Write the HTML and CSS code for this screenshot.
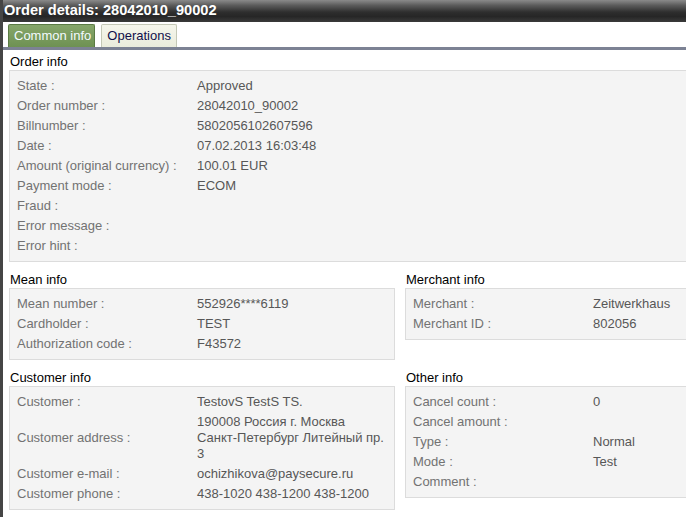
FILE: index.html
```html
<!DOCTYPE html>
<html>
<head>
<meta charset="utf-8">
<link rel="stylesheet" href="styles.css">
</head>
<body>
<div class="window">
  <div class="titlebar">Order details: 28042010_90002</div>
  <div class="tabs">
    <div class="tab active">Common info</div>
    <div class="tab">Operations</div>
  </div>
  <div class="content">
    <div class="section top">
      <div class="stitle">Order info</div>
      <div class="box edge">
        <table>
          <tr><td class="l">State :</td><td class="v">Approved</td></tr>
          <tr><td class="l">Order number :</td><td class="v">28042010_90002</td></tr>
          <tr><td class="l">Billnumber :</td><td class="v">5802056102607596</td></tr>
          <tr><td class="l">Date :</td><td class="v">07.02.2013 16:03:48</td></tr>
          <tr><td class="l">Amount (original currency) :</td><td class="v">100.01 EUR</td></tr>
          <tr><td class="l">Payment mode :</td><td class="v">ECOM</td></tr>
          <tr><td class="l">Fraud :</td><td class="v"></td></tr>
          <tr><td class="l">Error message :</td><td class="v"></td></tr>
          <tr><td class="l">Error hint :</td><td class="v"></td></tr>
        </table>
      </div>
    </div>
    <div class="grid">
      <div class="section">
        <div class="stitle">Mean info</div>
        <div class="box">
          <table>
            <tr><td class="l">Mean number :</td><td class="v">552926****6119</td></tr>
            <tr><td class="l">Cardholder :</td><td class="v">TEST</td></tr>
            <tr><td class="l">Authorization code :</td><td class="v">F43572</td></tr>
          </table>
        </div>
      </div>
      <div class="section">
        <div class="stitle">Merchant info</div>
        <div class="box edge">
          <table>
            <tr><td class="l">Merchant :</td><td class="v">Zeitwerkhaus</td></tr>
            <tr><td class="l">Merchant ID :</td><td class="v">802056</td></tr>
          </table>
        </div>
      </div>
      <div class="section">
        <div class="stitle">Customer info</div>
        <div class="box">
          <table>
            <tr><td class="l">Customer :</td><td class="v">TestovS TestS TS.</td></tr>
            <tr><td class="l">Customer address :</td><td class="v addr">190008 Россия г. Москва Санкт-Петербург Литейный пр. 3</td></tr>
            <tr><td class="l">Customer e-mail :</td><td class="v">ochizhikova@paysecure.ru</td></tr>
            <tr><td class="l">Customer phone :</td><td class="v">438-1020 438-1200 438-1200</td></tr>
          </table>
        </div>
      </div>
      <div class="section">
        <div class="stitle">Other info</div>
        <div class="box edge">
          <table>
            <tr><td class="l">Cancel count :</td><td class="v">0</td></tr>
            <tr><td class="l">Cancel amount :</td><td class="v"></td></tr>
            <tr><td class="l">Type :</td><td class="v">Normal</td></tr>
            <tr><td class="l">Mode :</td><td class="v">Test</td></tr>
            <tr><td class="l">Comment :</td><td class="v"></td></tr>
          </table>
        </div>
      </div>
    </div>
  </div>
</div>
</body>
</html>
```

FILE: styles.css
```css
html, body {
  margin: 0;
  padding: 0;
  background: #ffffff;
  overflow: hidden;
}
body {
  font-family: "Liberation Sans", Arial, sans-serif;
  font-size: 13px;
  width: 686px;
  height: 517px;
}
.window {
  border-left: 3px solid #454545;
  height: 517px;
  box-sizing: border-box;
  width: 686px;
  overflow: hidden;
}
.titlebar {
  height: 22px;
  line-height: 21px;
  margin-left: -3px;
  padding-left: 4px;
  background: linear-gradient(to bottom, #8a8a8a 0%, #5a5a5a 25%, #2e2e2e 55%, #262626 75%, #3a3a3a 100%);
  color: #ffffff;
  font-weight: bold;
  font-size: 14.6px;
}
.tabs {
  display: flex;
  gap: 6px;
  padding: 2px 0 0 5px;
  height: 23px;
  border-bottom: 3px solid #7c8294;
}
.tab {
  height: 22px;
  line-height: 22px;
  padding: 0 5px 0 5px;
  font-size: 13px;
  border: 1px solid #c4c8b6;
  border-bottom: none;
  border-radius: 2px 2px 0 0;
  background: linear-gradient(to bottom, #f5f6ec, #eaecdc);
  color: #10104a;
}
.tab.active {
  padding: 0 3px 0 5px;
  background: linear-gradient(to bottom, #86a66a, #6e9153);
  border-color: #5b7b44;
  color: #f4fbff;
}
.content {
  padding: 4px 0 0 6px;
}
.section.top {
  margin-bottom: 10px;
}
.stitle {
  height: 16px;
  line-height: 16px;
  color: #000000;
  padding-left: 1px;
}
.box {
  background: #f4f4f4;
  border: 1px solid #dcdcdc;
  padding: 5px 0;
}
.box.edge {
  border-right: none;
}
table {
  border-collapse: collapse;
}
td {
  padding: 2px 0;
  line-height: 16px;
  vertical-align: middle;
}
td.l {
  width: 180px;
  padding-left: 7px;
  color: #727272;
  white-space: nowrap;
}
td.v {
  color: #575757;
}
td.addr {
  width: 190px;
}
.grid {
  display: grid;
  grid-template-columns: 386px 1fr;
  column-gap: 10px;
  row-gap: 10px;
  align-items: start;
}
```
